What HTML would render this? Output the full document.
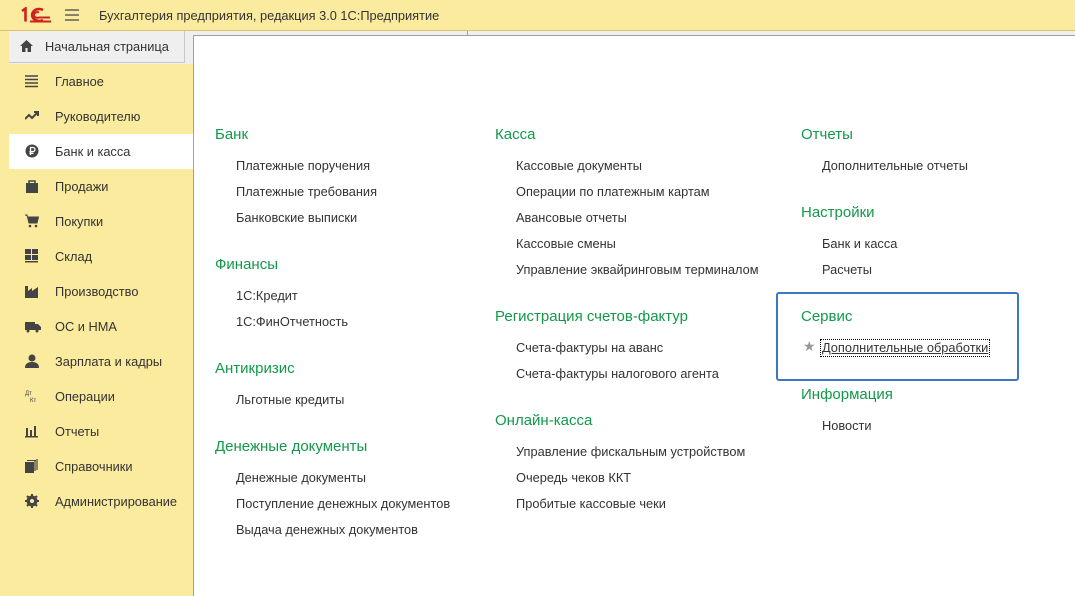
<!DOCTYPE html>
<html><head><meta charset="utf-8"><style>
*{margin:0;padding:0;box-sizing:border-box}
body{width:1075px;height:596px;overflow:hidden;background:#efefef;font-family:"Liberation Sans",Arial,sans-serif;position:relative;color:#333}
.top{position:absolute;left:0;top:0;width:1075px;height:31px;background:#fbeb9e;border-bottom:1px solid #d9c46a}
.top .t{position:absolute;left:99px;top:8px;font-size:12.8px;color:#333}
.strip{position:absolute;left:0;top:31px;width:9px;height:565px;background:#fbeb9e}
.home{position:absolute;left:9px;top:31px;width:176px;height:32px;background:#efefef;border-right:1px solid #c8c8c8;border-bottom:1px solid #c8c8c8;font-size:12.8px}
.home span{position:absolute;left:36px;top:8px}
.side{position:absolute;left:9px;top:64px;width:184px;height:532px;background:#fbeb9e}
.it{position:relative;height:35px;font-size:12.8px}
.it span{position:absolute;left:46px;top:10px}
.it svg{position:absolute;left:16px;top:10px}
.sel{background:#fff}
.panel{position:absolute;left:193px;top:35px;width:882px;height:561px;background:#fff;border-top:1px solid #a0a0a0;border-left:1px solid #a0a0a0}
.h{position:absolute;font-size:15px;color:#12994a}
.l{position:absolute;font-size:12.8px;color:#333}
.box{position:absolute;left:776px;top:292px;width:243px;height:89px;border:2px solid #3a78c0;border-radius:3px}
</style></head><body>
<div class="top">
<svg style="position:absolute;left:20px;top:7px" width="32" height="16" viewBox="0 0 32 16"><path d="M2 4l3.5-2.5v13" stroke="#d02020" stroke-width="2.6" fill="none"/><path d="M23 3a7 6 0 1 0 0 10" stroke="#d02020" stroke-width="2.6" fill="none"/><path d="M19 5.5a3.5 2.8 0 1 0 0 5h11" stroke="#d02020" stroke-width="2" fill="none"/><rect x="10" y="13.5" width="21" height="2" fill="#d02020"/></svg>
<svg style="position:absolute;left:65px;top:9px" width="14" height="12"><path d="M0 1h14M0 6h14M0 11h14" stroke="#444" stroke-width="1.3"/></svg>
<div class="t">Бухгалтерия предприятия, редакция 3.0 1С:Предприятие</div>
</div>
<div style="position:absolute;left:467px;top:31px;width:1px;height:4px;background:#a0a0a0"></div>
<div class="strip"></div>
<div class="home"><svg style="position:absolute;left:11px;top:9px" width="13" height="12"><path d="M6.5 0L0 6h2v6h3.5V8h2v4H11V6h2z" fill="#444"/></svg><span>Начальная страница</span></div>
<div class="side">
<div class="it"><svg width="14" height="14"><path d="M0 2h13M0 5.5h13M0 9h13M0 12.5h13" stroke="#444" stroke-width="1.6"/></svg><span>Главное</span></div>
<div class="it"><svg width="14" height="14"><path d="M0 10l4-4 3 3 5-5M9 3h4v4" stroke="#444" stroke-width="2" fill="none"/></svg><span>Руководителю</span></div>
<div class="it sel"><svg width="14" height="14"><circle cx="7" cy="7" r="6.5" fill="#444"/><path d="M5.5 11V3.5h2.5a2 2 0 0 1 0 4H4.5M4.5 9.3h4" stroke="#fff" stroke-width="1.3" fill="none"/></svg><span>Банк и касса</span></div>
<div class="it"><svg width="14" height="14"><rect x="1" y="4" width="12" height="10" fill="#444"/><path d="M4 5V2h6v3" stroke="#444" stroke-width="1.5" fill="none"/></svg><span>Продажи</span></div>
<div class="it"><svg width="14" height="14"><path d="M0 1h2l2 8h8l1.5-6H3" fill="#444" stroke="#444"/><circle cx="5" cy="12" r="1.3" fill="#444"/><circle cx="11" cy="12" r="1.3" fill="#444"/></svg><span>Покупки</span></div>
<div class="it"><svg width="14" height="14"><rect x="0" y="0" width="6" height="5" fill="#444"/><rect x="7" y="0" width="6" height="5" fill="#444"/><rect x="0" y="6" width="6" height="5" fill="#444"/><rect x="7" y="6" width="6" height="5" fill="#444"/><rect x="0" y="12" width="13" height="1.5" fill="#444"/></svg><span>Склад</span></div>
<div class="it"><svg width="14" height="14"><path d="M0 14V2h3v5l4-3v3l6-4v11z" fill="#444"/></svg><span>Производство</span></div>
<div class="it"><svg width="16" height="14"><path d="M0 3h10v8H0zM10 5h3l3 3v3h-6z" fill="#444"/><circle cx="3" cy="12" r="1.5" fill="#444"/><circle cx="12" cy="12" r="1.5" fill="#444"/></svg><span>ОС и НМА</span></div>
<div class="it"><svg width="14" height="14"><circle cx="7" cy="4" r="3.5" fill="#444"/><path d="M0 14q0-6 7-6t7 6z" fill="#444"/></svg><span>Зарплата и кадры</span></div>
<div class="it"><svg width="14" height="14"><text x="0" y="6" font-size="6" font-family="Liberation Sans" fill="#444">Дт</text><text x="5" y="13" font-size="6" font-family="Liberation Sans" fill="#444">Кт</text></svg><span>Операции</span></div>
<div class="it"><svg width="14" height="14"><path d="M1 4h2v8H1zM5 6h2v6H5zM9 2h2v10H9zM0 12h13v1.5H0z" fill="#444"/></svg><span>Отчеты</span></div>
<div class="it"><svg width="14" height="14"><rect x="0" y="3" width="9" height="11" fill="#444"/><path d="M10 2v10M12 0v11" stroke="#444" stroke-width="1.2"/><path d="M2 1.5h9" stroke="#444" stroke-width="1"/></svg><span>Справочники</span></div>
<div class="it"><svg width="14" height="14"><circle cx="7" cy="7" r="4" fill="none" stroke="#444" stroke-width="3"/><path d="M7 0v14M0 7h14M2 2l10 10M12 2L2 12" stroke="#444" stroke-width="2"/><circle cx="7" cy="7" r="2" fill="#fbeb9e"/></svg><span>Администрирование</span></div>
</div>
<div class="panel"></div>
<div class="h" style="left:215px;top:126px">Банк</div>
<div class="l" style="left:236px;top:158px">Платежные поручения</div>
<div class="l" style="left:236px;top:184px">Платежные требования</div>
<div class="l" style="left:236px;top:210px">Банковские выписки</div>
<div class="h" style="left:215px;top:256px">Финансы</div>
<div class="l" style="left:236px;top:288px">1С:Кредит</div>
<div class="l" style="left:236px;top:314px">1С:ФинОтчетность</div>
<div class="h" style="left:215px;top:360px">Антикризис</div>
<div class="l" style="left:236px;top:392px">Льготные кредиты</div>
<div class="h" style="left:215px;top:438px">Денежные документы</div>
<div class="l" style="left:236px;top:470px">Денежные документы</div>
<div class="l" style="left:236px;top:496px">Поступление денежных документов</div>
<div class="l" style="left:236px;top:522px">Выдача денежных документов</div>
<div class="h" style="left:495px;top:126px">Касса</div>
<div class="l" style="left:516px;top:158px">Кассовые документы</div>
<div class="l" style="left:516px;top:184px">Операции по платежным картам</div>
<div class="l" style="left:516px;top:210px">Авансовые отчеты</div>
<div class="l" style="left:516px;top:236px">Кассовые смены</div>
<div class="l" style="left:516px;top:262px">Управление эквайринговым терминалом</div>
<div class="h" style="left:495px;top:308px">Регистрация счетов-фактур</div>
<div class="l" style="left:516px;top:340px">Счета-фактуры на аванс</div>
<div class="l" style="left:516px;top:366px">Счета-фактуры налогового агента</div>
<div class="h" style="left:495px;top:412px">Онлайн-касса</div>
<div class="l" style="left:516px;top:444px">Управление фискальным устройством</div>
<div class="l" style="left:516px;top:470px">Очередь чеков ККТ</div>
<div class="l" style="left:516px;top:496px">Пробитые кассовые чеки</div>
<div class="h" style="left:801px;top:126px">Отчеты</div>
<div class="l" style="left:822px;top:158px">Дополнительные отчеты</div>
<div class="h" style="left:801px;top:204px">Настройки</div>
<div class="l" style="left:822px;top:236px">Банк и касса</div>
<div class="l" style="left:822px;top:262px">Расчеты</div>
<div class="box"></div>
<div class="h" style="left:801px;top:308px">Сервис</div>
<div style="position:absolute;left:803px;top:338px;font-size:14px;color:#999">★</div>
<div class="l" style="left:820px;top:339px;border:1px dotted #000;padding:0 1px;text-decoration:underline;line-height:16px">Дополнительные обработки</div>
<div class="h" style="left:801px;top:386px">Информация</div>
<div class="l" style="left:822px;top:418px">Новости</div>
</body></html>
